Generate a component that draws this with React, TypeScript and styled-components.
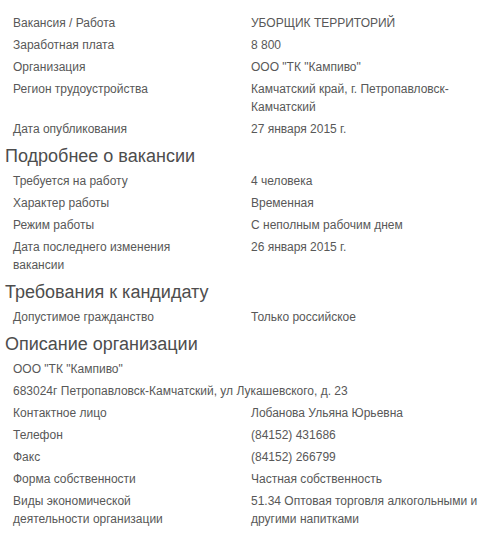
import React from "react";
import styled, { createGlobalStyle } from "styled-components";

const Global = createGlobalStyle`
  html, body { margin: 0; padding: 0; background: #ffffff; }
  body { font-family: "Liberation Sans", Arial, sans-serif; }
`;

const Page = styled.div`
  padding: 12px 0 0 5px;
  width: 485px;
  color: #585858;
  font-size: 12px;
  line-height: 18px;
`;

const Heading = styled.h2`
  margin: 0;
  padding-top: 2px;
  height: 28px;
  line-height: 28px;
  font-size: 18px;
  font-weight: normal;
  color: #4d4d4d;
`;

const Row = styled.div<{ $full?: boolean }>`
  display: grid;
  grid-template-columns: ${(p) => (p.$full ? "1fr" : "184px 236px")};
  column-gap: 54px;
  padding: 2px 0 2px 8px;
`;

const Cell = styled.div``;

type Item = [string, string?];

const Section = ({ title, items }: { title?: string; items: Item[] }) => (
  <>
    {title && <Heading>{title}</Heading>}
    {items.map(([l, v], i) =>
      v === undefined ? (
        <Row key={i} $full>
          <Cell>{l}</Cell>
        </Row>
      ) : (
        <Row key={i}>
          <Cell>{l}</Cell>
          <Cell>{v}</Cell>
        </Row>
      )
    )}
  </>
);

export default function App() {
  return (
    <>
      <Global />
      <Page>
        <Section
          items={[
            ["Вакансия / Работа", "УБОРЩИК ТЕРРИТОРИЙ"],
            ["Заработная плата", "8 800"],
            ["Организация", 'ООО "ТК "Кампиво"'],
            ["Регион трудоустройства", "Камчатский край, г. Петропавловск-Камчатский"],
            ["Дата опубликования", "27 января 2015 г."],
          ]}
        />
        <Section
          title="Подробнее о вакансии"
          items={[
            ["Требуется на работу", "4 человека"],
            ["Характер работы", "Временная"],
            ["Режим работы", "С неполным рабочим днем"],
            ["Дата последнего изменения вакансии", "26 января 2015 г."],
          ]}
        />
        <Section
          title="Требования к кандидату"
          items={[["Допустимое гражданство", "Только российское"]]}
        />
        <Section
          title="Описание организации"
          items={[
            ['ООО "ТК "Кампиво"'],
            ["683024г Петропавловск-Камчатский, ул Лукашевского, д. 23"],
            ["Контактное лицо", "Лобанова Ульяна Юрьевна"],
            ["Телефон", "(84152) 431686"],
            ["Факс", "(84152) 266799"],
            ["Форма собственности", "Частная собственность"],
            ["Виды экономической деятельности организации", "51.34 Оптовая торговля алкогольными и другими напитками"],
          ]}
        />
      </Page>
    </>
  );
}
